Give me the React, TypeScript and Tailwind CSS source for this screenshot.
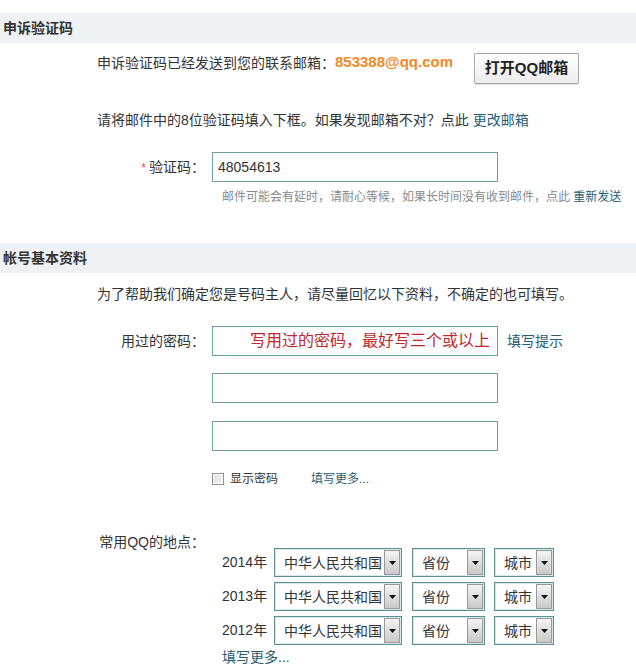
import React from "react";

const font = { fontFamily: '"Liberation Sans", "Noto Sans CJK SC", sans-serif' };

const SectionHeader = ({ title }: { title: string }) => (
  <div className="h-[30px] bg-[#eff2f5] pl-[3px] flex items-center text-[14px] font-bold text-[#333]">
    {title}
  </div>
);

const FakeSelect = ({ label, width, arrowW = 16 }: { label: string; width: string; arrowW?: number }) => (
  <div className={`${width} h-[29px] border border-[#5d9095] bg-white flex items-center justify-between pl-[9px] pr-[1px] shadow-[inset_0_0_0_1px_#d9e8ea]`}>
    <span className="text-[14px] text-[#333] leading-none whitespace-nowrap">{label}</span>
    <div
      className="h-[25px] border border-[#999] bg-gradient-to-b from-[#f4f4f4] to-[#c9c9c9] flex items-center justify-center"
      style={{ width: arrowW }}
    >
      <svg width="7" height="4" viewBox="0 0 7 4">
        <path d="M0 0h7L3.5 4z" fill="#111" />
      </svg>
    </div>
  </div>
);

const years = ["2014年", "2013年", "2012年"];

export default function App() {
  return (
    <div className="w-[636px] min-h-[666px] bg-white text-[#333] text-[14px]" style={font}>
      <div className="pt-[13px]">
        <SectionHeader title="申诉验证码" />
      </div>

      {/* sent notice */}
      <div className="pl-[97px] mt-[10px] flex items-start">
        <span className="leading-[20px]">申诉验证码已经发送到您的联系邮箱：</span>
        <span className="leading-[20px] font-bold text-[15px] text-[#f0892a] -mt-[1px]">853388@qq.com</span>
        <button className="ml-[21px] w-[105px] h-[31px] border border-[#a9a9a9] rounded-[2px] bg-gradient-to-b from-white to-[#ececec] shadow-[0_1px_1px_rgba(0,0,0,0.15)] text-[15px] font-bold text-[#222]">
          打开QQ邮箱
        </button>
      </div>

      <div className="pl-[97px] mt-[26px] leading-[20px]">
        请将邮件中的8位验证码填入下框。如果发现邮箱不对？点此 <span className="text-[#2a5d73]">更改邮箱</span>
      </div>

      {/* code input */}
      <div className="mt-[22px] flex items-center">
        <div className="w-[205px] text-right whitespace-nowrap">
          <span className="text-[#e05050] text-[12px] mr-[3px]">*</span>验证码：
        </div>
        <input
          readOnly
          defaultValue="48054613"
          className="ml-[7px] w-[286px] h-[30px] border border-[#6b9da2] px-[5px] text-[14px] text-[#333] outline-none"
          style={font}
        />
      </div>
      <div className="pl-[222px] mt-[7px] text-[12px] leading-[16px] text-[#8a8a8a] whitespace-nowrap">
        邮件可能会有延时，请耐心等候，如果长时间没有收到邮件，点此 <span className="text-[#2a5d73]">重新发送</span>
      </div>

      <div className="mt-[38px]">
        <SectionHeader title="帐号基本资料" />
      </div>

      <div className="pl-[97px] mt-[11px] leading-[20px]">
        为了帮助我们确定您是号码主人，请尽量回忆以下资料，不确定的也可填写。
      </div>

      {/* passwords */}
      <div className="mt-[22px] flex items-center">
        <div className="w-[205px] text-right">用过的密码：</div>
        <div className="ml-[7px] w-[286px] h-[30px] border border-[#6b9da2] flex items-center justify-end pr-[7px] text-[16px] text-[#c0272d] whitespace-nowrap">
          写用过的密码，最好写三个或以上
        </div>
        <span className="ml-[9px] text-[#2a5d73]">填写提示</span>
      </div>
      <div className="pl-[212px] mt-[17px] flex flex-col gap-[18px]">
        <div className="w-[286px] h-[30px] border border-[#6b9da2]" />
        <div className="w-[286px] h-[30px] border border-[#6b9da2]" />
      </div>
      <div className="pl-[212px] mt-[20px] flex items-center text-[12px] leading-[16px]">
        <div className="w-[12px] h-[12px] border border-[#8f8f8f] bg-gradient-to-br from-[#dcdcdc] to-[#f6f6f6] shadow-[inset_0_0_0_1px_#fff]" />
        <span className="ml-[6px]">显示密码</span>
        <span className="ml-[33px] text-[#2a5d73]">填写更多...</span>
      </div>

      {/* locations */}
      <div className="mt-[45px] flex items-start">
        <div className="w-[205px] text-right leading-[20px]">常用QQ的地点：</div>
        <div className="ml-[17px] pt-[16px] flex flex-col gap-[5px]">
          {years.map((y) => (
            <div key={y} className="flex items-center">
              <span className="w-[46px] whitespace-nowrap">{y}</span>
              <div className="ml-[6px]">
                <FakeSelect label="中华人民共和国" width="w-[128px]" />
              </div>
              <div className="ml-[10px]">
                <FakeSelect label="省份" width="w-[73px]" />
              </div>
              <div className="ml-[9px]">
                <FakeSelect label="城市" width="w-[60px]" />
              </div>
            </div>
          ))}
          <div className="text-[#2a5d73] leading-[16px] -mt-[1px]">填写更多...</div>
        </div>
      </div>
    </div>
  );
}
